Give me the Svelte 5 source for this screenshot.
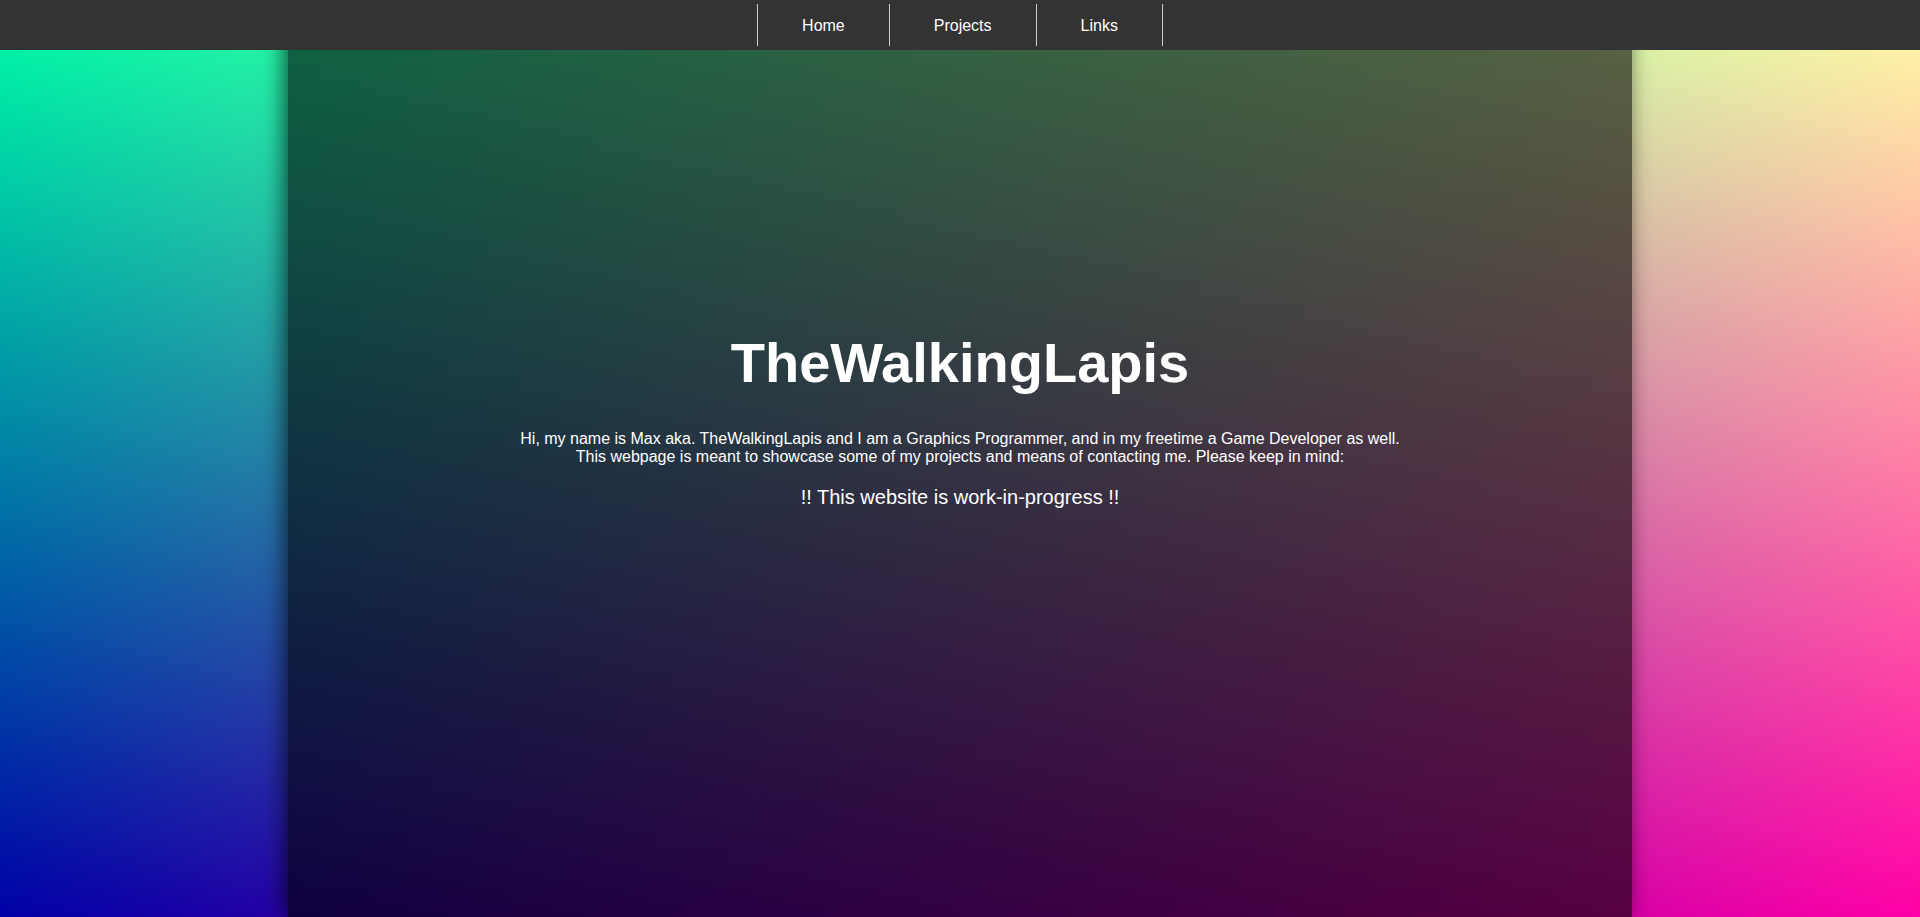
<script>
  const links = ['Home', 'Projects', 'Links'];
</script>

<div class="page">
  <nav>
    <ul>
      {#each links as link}
        <li><a href={'#' + link.toLowerCase()}>{link}</a></li>
      {/each}
    </ul>
  </nav>
  <main>
    <h1>TheWalkingLapis</h1>
    <p>
      Hi, my name is Max aka. TheWalkingLapis and I am a Graphics Programmer, and in my freetime a Game Developer as well.<br />
      This webpage is meant to showcase some of my projects and means of contacting me. Please keep in mind:
    </p>
    <p class="notice">!! This website is work-in-progress !!</p>
  </main>
</div>

<style>
  :global(body) {
    margin: 0;
  }

  /* Red runs left to right, green bottom to top; blue stays constant. */
  .page {
    display: flex;
    flex-direction: column;
    min-height: 100vh;
    font-family: "Liberation Sans", Arial, sans-serif;
    font-size: 16px;
    line-height: 18px;
    color: #fff;
    background:
      linear-gradient(to right, #000, #f00),
      linear-gradient(to top, #0000a6, #00ffa6);
    background-blend-mode: screen;
    overflow: hidden;
  }

  nav {
    position: relative;
    z-index: 1;
    background: #333;
  }

  ul {
    display: flex;
    justify-content: center;
    margin: 0;
    padding: 4px 0;
    list-style: none;
  }

  li {
    border-right: 1px solid #ccc;
  }

  li:first-child {
    border-left: 1px solid #ccc;
  }

  a {
    display: block;
    padding: 12px 44px;
    line-height: 18px;
    padding-top: 13px;
    padding-bottom: 11px;
    color: #fff;
    text-decoration: none;
  }

  /* The panel starts beneath the bar, so its shadow runs up to the bar's edge. */
  main {
    flex: 1;
    box-sizing: border-box;
    width: 70%;
    margin: -50px auto 0;
    padding: 331px 24px 24px;
    text-align: center;
    background: rgba(0, 0, 0, 0.6);
    box-shadow: -4px 0 20px rgba(0, 0, 0, 0.65);
  }

  h1 {
    margin: 0 0 35px;
    font-size: 56px;
    line-height: 64px;
  }

  p {
    margin: 0 0 19px;
  }

  .notice {
    margin: 0;
    font-size: 20px;
    line-height: 24px;
  }
</style>
